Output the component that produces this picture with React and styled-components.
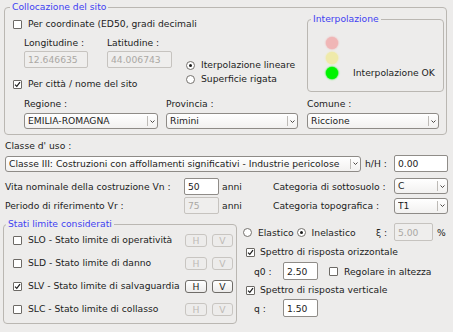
import React from "react";
import styled, { createGlobalStyle } from "styled-components";

const GlobalStyle = createGlobalStyle`
  html, body {
    margin: 0;
    padding: 0;
    background: #edeceb;
  }
  body {
    font-family: "DejaVu Sans", "Liberation Sans", sans-serif;
    font-size: 9.2px;
    color: #1c1c1c;
  }
  * {
    box-sizing: border-box;
  }
`;

const Page = styled.div`
  width: 453px;
  height: 332px;
  overflow: hidden;
  background: #edeceb;
`;

const Group = styled.fieldset`
  margin: ${p => p.$margin || 0};
  padding: 0;
  min-width: 0;
  width: ${p => (p.$w ? `${p.$w}px` : "auto")};
  height: ${p => p.$h}px;
  border: 1px solid #bab7b2;
  border-radius: 4px;
  flex-shrink: 0;
`;

const Legend = styled.legend`
  margin-left: ${p => p.$ml}px;
  padding: 0 2px;
  line-height: 14px;
  color: #3f3ff2;
`;

const Text = styled.span`
  white-space: nowrap;
  line-height: 14px;
`;

/* ---------- small controls ---------- */

const CheckRow = styled.div`
  display: flex;
  align-items: center;
  height: ${p => p.$h || 16}px;
  margin-top: ${p => p.$mt || 0}px;
  padding-left: ${p => p.$pl || 0}px;
  gap: ${p => p.$gap || 6}px;
  white-space: nowrap;
`;

const BoxMark = styled.span`
  display: inline-flex;
  width: 9px;
  height: 9px;
  flex-shrink: 0;
  border: 1px solid #6c6965;
  border-radius: 1px;
  background: #fff;
`;

const Checkbox = ({ checked }) => (
  <BoxMark>
    {checked && (
      <svg width="7" height="7" viewBox="0 0 7 7">
        <path d="M1 3.6 L2.8 5.4 L6 1.2" fill="none" stroke="#1c1c1c" strokeWidth="1.2" />
      </svg>
    )}
  </BoxMark>
);

const RadioMark = styled.span`
  display: inline-flex;
  align-items: center;
  justify-content: center;
  width: 9px;
  height: 9px;
  flex-shrink: 0;
  border: 1px solid #75726e;
  border-radius: 50%;
  background: #fff;

  &::after {
    content: "";
    display: ${p => (p.$on ? "block" : "none")};
    width: 3px;
    height: 3px;
    border-radius: 50%;
    background: #1c1c1c;
  }
`;

const TextBox = styled.input`
  width: ${p => p.$w}px;
  height: ${p => p.$h || 17}px;
  margin: 0;
  padding: 0 0 0 3px;
  font: inherit;
  color: ${p => (p.$off ? "#aba8a4" : "#1c1c1c")};
  border: 1px solid ${p => (p.$off ? "#c6c3bf" : "#8f8c88")};
  border-radius: 2px;
  background: ${p => (p.$off ? "#efeeed" : "#fff")};
  outline: none;
  flex-shrink: 0;
`;

const ComboBox = styled.div`
  display: flex;
  align-items: center;
  width: ${p => p.$w}px;
  height: 16px;
  padding-left: 3px;
  border: 1px solid #8e8b87;
  border-radius: 3px;
  background: linear-gradient(#ffffff, #f2f1f0);
  flex-shrink: 0;
`;

const ComboText = styled.span`
  flex: 1;
  overflow: hidden;
  white-space: nowrap;
  line-height: 14px;
`;

const ComboArrow = styled.span`
  display: flex;
  align-items: center;
  justify-content: center;
  width: 10px;
  height: 10px;
  border-left: 1px solid #bdbab6;
`;

const Combo = ({ w, value }) => (
  <ComboBox $w={w}>
    <ComboText>{value}</ComboText>
    <ComboArrow>
      <svg width="5" height="3" viewBox="0 0 5 3">
        <path d="M0.5 0.5 L2.5 2.5 L4.5 0.5" fill="none" stroke="#4a4744" strokeWidth="1" />
      </svg>
    </ComboArrow>
  </ComboBox>
);

const StateButton = styled.button`
  width: ${p => p.$w}px;
  height: 13px;
  margin: 0 0 0 ${p => p.$ml}px;
  padding: 0;
  font: inherit;
  line-height: 11px;
  color: ${p => (p.$off ? "#bdbab6" : "#1c1c1c")};
  border: 1px solid ${p => (p.$off ? "#c8c5c1" : "#6f6c68")};
  border-radius: 3px;
  background: ${p => (p.$off ? "#edeceb" : "linear-gradient(#ffffff, #ecebea)")};
  flex-shrink: 0;
`;

/* ---------- site group ---------- */

const SiteBody = styled.div`
  padding-left: 8px;
`;

const TopArea = styled.div`
  display: flex;
  align-items: flex-start;
  height: 78px;
`;

const FormCol = styled.div`
  display: flex;
  flex-direction: column;
  width: 173px;
  padding-top: 2px;
  flex-shrink: 0;
`;

const CoordFields = styled.div`
  display: flex;
  gap: 19px;
  margin: 4px 0 0 11px;
`;

const Field = styled.div`
  display: flex;
  flex-direction: column;
  gap: ${p => p.$gap || 1}px;
  width: ${p => p.$w}px;
  margin-left: ${p => p.$ml || 0}px;
  flex-shrink: 0;
`;

const RadioCol = styled.div`
  display: flex;
  flex-direction: column;
  width: 121px;
  padding-top: 44px;
  flex-shrink: 0;
`;

const InterpBody = styled.div`
  display: flex;
  padding: 11px 0 0 18px;
`;

const Lights = styled.div`
  display: flex;
  flex-direction: column;
  gap: 3px;
`;

const Light = styled.span`
  width: 12px;
  height: 12px;
  border-radius: 50%;
  background: ${p => p.$c};
  box-shadow: 0 0 1.5px 0.5px ${p => p.$c};
`;

const InterpStatus = styled(Text)`
  align-self: flex-end;
  margin-left: 15px;
  line-height: 12px;
`;

const ComboRow = styled.div`
  display: flex;
  margin: 5px 0 0 11px;
`;

/* ---------- middle ---------- */

const ClasseLabel = styled.div`
  margin: 4px 0 0 5px;
  line-height: 14px;
`;

const ClasseRow = styled.div`
  display: flex;
  align-items: center;
  margin: 2px 0 0 5px;
`;

const HLabel = styled(Text)`
  width: 29px;
  margin-left: 4px;
  flex-shrink: 0;
`;

const ParamGrid = styled.div`
  display: grid;
  grid-template-columns: 179px 35px 54px 121px 54px;
  grid-template-rows: 20px 19px;
  align-items: center;
  margin: 4px 0 0 5px;
  white-space: nowrap;
`;

const Unit = styled.span`
  padding-left: 3px;
`;

/* ---------- bottom ---------- */

const BottomArea = styled.div`
  display: flex;
  align-items: flex-start;
  margin: 2px 0 0 3px;
`;

const LimitList = styled.div`
  display: flex;
  flex-direction: column;
  gap: 7px;
  padding: 1px 0 0 9px;
`;

const LimitText = styled.span`
  width: 154px;
  overflow: hidden;
  white-space: nowrap;
  line-height: 14px;
`;

const SpectrumCol = styled.div`
  display: flex;
  flex-direction: column;
  width: 204px;
  margin-left: 6px;
  padding-top: 6px;
`;

const Row = styled.div`
  display: flex;
  align-items: center;
  height: ${p => p.$h}px;
  margin-top: ${p => p.$mt || 0}px;
  padding-left: ${p => p.$pl || 0}px;
  white-space: nowrap;
`;

const RadioItem = styled.span`
  display: inline-flex;
  align-items: center;
  gap: 6px;
  margin-left: ${p => p.$ml || 0}px;
`;

const XiGroup = styled.span`
  display: inline-flex;
  align-items: center;
  margin-left: auto;
`;

const XiLabel = styled.span`
  width: 18px;
`;

const Percent = styled.span`
  width: 10px;
  margin-left: 4px;
`;

const QLabel = styled.span`
  width: 29px;
  padding-left: 11px;
  box-sizing: content-box;
`;

const limits = [
  { text: "SLO - Stato limite di operatività", on: false },
  { text: "SLD - Stato limite di danno", on: false },
  { text: "SLV - Stato limite di salvaguardia", on: true },
  { text: "SLC - Stato limite di collasso", on: false },
];

export default function App() {
  return (
    <Page>
      <GlobalStyle />

      <Group $margin="0 6px 0 4px" $h={135}>
        <Legend $ml={5}>Collocazione del sito</Legend>
        <SiteBody>
          <TopArea>
            <FormCol>
              <CheckRow>
                <Checkbox />
                <Text>Per coordinate (ED50, gradi decimali</Text>
              </CheckRow>
              <CoordFields>
                <Field $w={64}>
                  <Text>Longitudine :</Text>
                  <TextBox $w={64} $off readOnly value="12.646635" />
                </Field>
                <Field $w={65}>
                  <Text>Latitudine :</Text>
                  <TextBox $w={65} $off readOnly value="44.006743" />
                </Field>
              </CoordFields>
              <CheckRow $mt={8}>
                <Checkbox checked />
                <Text>Per città / nome del sito</Text>
              </CheckRow>
            </FormCol>

            <RadioCol>
              <CheckRow $h={14}>
                <RadioMark $on />
                <Text>Iterpolazione lineare</Text>
              </CheckRow>
              <CheckRow $h={14}>
                <RadioMark />
                <Text>Superficie rigata</Text>
              </CheckRow>
            </RadioCol>

            <Group $w={137} $h={80} $margin="-2px 0 0 0">
              <Legend $ml={3}>Interpolazione</Legend>
              <InterpBody>
                <Lights>
                  <Light $c="#f0b6b6" />
                  <Light $c="#efeaaa" />
                  <Light $c="#00f400" />
                </Lights>
                <InterpStatus>Interpolazione OK</InterpStatus>
              </InterpBody>
            </Group>
          </TopArea>

          <ComboRow>
            <Field $w={134} $gap={2}>
              <Text>Regione :</Text>
              <Combo w={134} value="EMILIA-ROMAGNA" />
            </Field>
            <Field $w={132} $gap={2} $ml={8}>
              <Text>Provincia :</Text>
              <Combo w={132} value="Rimini" />
            </Field>
            <Field $w={132} $gap={2} $ml={9}>
              <Text>Comune :</Text>
              <Combo w={132} value="Riccione" />
            </Field>
          </ComboRow>
        </SiteBody>
      </Group>

      <ClasseLabel>Classe d' uso :</ClasseLabel>
      <ClasseRow>
        <Combo w={356} value="Classe III: Costruzioni con affollamenti significativi - Industrie pericolose" />
        <HLabel>h/H :</HLabel>
        <TextBox $w={54} readOnly value="0.00" />
      </ClasseRow>

      <ParamGrid>
        <span>Vita nominale della costruzione Vn :</span>
        <TextBox $w={35} readOnly value="50" />
        <Unit>anni</Unit>
        <span>Categoria di sottosuolo :</span>
        <Combo w={54} value="C" />

        <span>Periodo di riferimento Vr :</span>
        <TextBox $w={35} $off readOnly value="75" />
        <Unit>anni</Unit>
        <span>Categoria topografica :</span>
        <Combo w={54} value="T1" />
      </ParamGrid>

      <BottomArea>
        <Group $w={234} $h={107}>
          <Legend $ml={2}>Stati limite considerati</Legend>
          <LimitList>
            {limits.map(item => (
              <CheckRow key={item.text} $gap={6}>
                <Checkbox checked={item.on} />
                <LimitText>{item.text}</LimitText>
                <StateButton $w={22} $ml={-3} $off={!item.on}>H</StateButton>
                <StateButton $w={21} $ml={-1} $off={!item.on}>V</StateButton>
              </CheckRow>
            ))}
          </LimitList>
        </Group>

        <SpectrumCol>
          <Row $h={18}>
            <RadioItem>
              <RadioMark />
              <span>Elastico</span>
            </RadioItem>
            <RadioItem $ml={3}>
              <RadioMark $on />
              <span>Inelastico</span>
            </RadioItem>
            <XiGroup>
              <XiLabel>ξ :</XiLabel>
              <TextBox $w={39} $h={18} $off readOnly value="5.00" />
              <Percent>%</Percent>
            </XiGroup>
          </Row>
          <CheckRow $mt={3} $pl={3} $gap={5}>
            <Checkbox checked />
            <Text>Spettro di risposta orizzontale</Text>
          </CheckRow>
          <Row $h={18} $mt={2}>
            <QLabel>q0 :</QLabel>
            <TextBox $w={35} $h={18} readOnly value="2.50" />
            <RadioItem $ml={11}>
              <Checkbox />
              <span>Regolare in altezza</span>
            </RadioItem>
          </Row>
          <CheckRow $mt={2} $pl={3} $gap={5}>
            <Checkbox checked />
            <Text>Spettro di risposta verticale</Text>
          </CheckRow>
          <Row $h={18} $mt={1}>
            <QLabel>q :</QLabel>
            <TextBox $w={35} $h={18} readOnly value="1.50" />
          </Row>
        </SpectrumCol>
      </BottomArea>
    </Page>
  );
}
